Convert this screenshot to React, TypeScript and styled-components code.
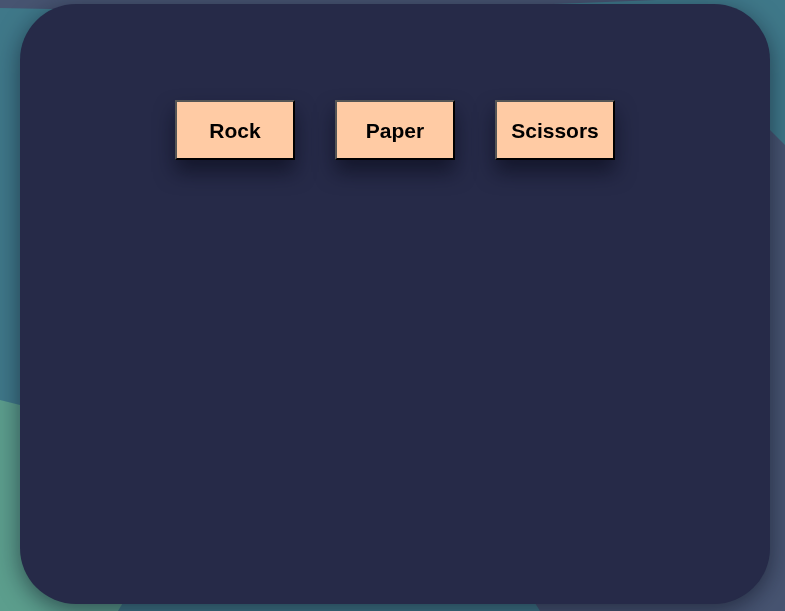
import React from "react";
import styled, { createGlobalStyle } from "styled-components";

const Global = createGlobalStyle`
  html, body {
    margin: 0;
    padding: 0;
    background: #465370;
    font-family: "Liberation Sans", Arial, sans-serif;
    overflow: hidden;
  }
`;

const Backdrop = styled.svg`
  position: fixed;
  inset: 0;
  width: 785px;
  height: 611px;
  z-index: 0;
`;

const Page = styled.main`
  position: relative;
  z-index: 1;
  padding: 4px 16px 8px 20px;
`;

const Card = styled.section`
  width: 750px;
  height: 600px;
  box-sizing: border-box;
  background: #262a48;
  border-radius: 56px;
  box-shadow: 0 6px 24px rgba(10, 12, 30, 0.55);
  display: flex;
  flex-direction: column;
  align-items: center;
  padding-top: 96px;
`;

const ChoiceRow = styled.div`
  display: flex;
  gap: 40px;
`;

const ChoiceButton = styled.button`
  width: 120px;
  height: 60px;
  box-sizing: border-box;
  background: #ffcba4;
  border-style: solid;
  border-width: 2px;
  border-color: #555 #000 #000 #555;
  font-family: "Liberation Sans", Arial, sans-serif;
  font-weight: bold;
  font-size: 21px;
  color: #000;
  padding: 1px 0 0;
  cursor: pointer;
  box-shadow: 0 12px 20px rgba(8, 10, 25, 0.6);
`;

const choices = ["Rock", "Paper", "Scissors"];

export default function App() {
  return (
    <>
      <Global />
      <Backdrop viewBox="0 0 785 611" preserveAspectRatio="none" aria-hidden>
        <rect x="0" y="0" width="785" height="611" fill="#475471" />
        <polygon
          points="0,8 300,14 657,0 785,0 785,145 770,130 700,300 600,450 535,603 540,611 0,611"
          fill="#3f7889"
        />
        <polygon
          points="0,400 20,405 120,450 160,540 118,611 0,611"
          fill="#5c9e8d"
        />
      </Backdrop>
      <Page>
        <Card>
          <ChoiceRow>
            {choices.map((c) => (
              <ChoiceButton key={c}>{c}</ChoiceButton>
            ))}
          </ChoiceRow>
        </Card>
      </Page>
    </>
  );
}
